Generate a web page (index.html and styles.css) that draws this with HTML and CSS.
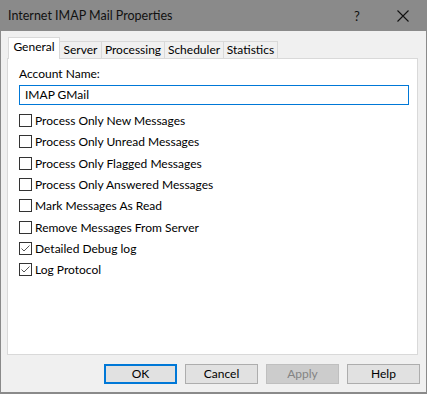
FILE: index.html
```html
<!DOCTYPE html>
<html>
<head>
  <meta charset="UTF-8">
  <title>Internet IMAP Mail Properties</title>
  <link rel="stylesheet" href="styles.css">
</head>
<body>

  <div class="okno">
    <div class="pasek">
      <span class="tytul">Internet IMAP Mail Properties</span>
      <span class="pomoc">?</span>
      <span class="zamknij">
        <svg width="12" height="12" viewBox="0 0 12 12"><path d="M0.5 0.5 L11.5 11.5 M11.5 0.5 L0.5 11.5" stroke="#111" stroke-width="1.1" fill="none"/></svg>
      </span>
    </div>

    <div class="srodek">
      <div class="zakladki">
        <div class="zakladka aktywna">General</div>
        <div class="zakladka z-server">Server</div>
        <div class="zakladka z-processing">Processing</div>
        <div class="zakladka z-scheduler">Scheduler</div>
        <div class="zakladka z-statistics">Statistics</div>
      </div>

      <div class="panel">
        <div class="etykieta">Account Name:</div>
        <div class="pole">IMAP GMail</div>

        <div class="opcje">
          <div class="opcja"><span class="kratka"></span>Process Only New Messages</div>
          <div class="opcja"><span class="kratka"></span>Process Only Unread Messages</div>
          <div class="opcja"><span class="kratka"></span>Process Only Flagged Messages</div>
          <div class="opcja"><span class="kratka"></span>Process Only Answered Messages</div>
          <div class="opcja"><span class="kratka"></span>Mark Messages As Read</div>
          <div class="opcja"><span class="kratka"></span>Remove Messages From Server</div>
          <div class="opcja"><span class="kratka"><svg width="11" height="11" viewBox="0 0 11 11"><path d="M1.5 5.5 L4 8 L9.5 2.5" stroke="#555" stroke-width="1" fill="none"/></svg></span>Detailed Debug log</div>
          <div class="opcja"><span class="kratka"><svg width="11" height="11" viewBox="0 0 11 11"><path d="M1.5 5.5 L4 8 L9.5 2.5" stroke="#555" stroke-width="1" fill="none"/></svg></span>Log Protocol</div>
        </div>
      </div>

      <div class="przyciski">
        <div class="przycisk domyslny">OK</div>
        <div class="przycisk">Cancel</div>
        <div class="przycisk wylaczony">Apply</div>
        <div class="przycisk">Help</div>
      </div>
    </div>
  </div>

</body>
</html>
```

FILE: styles.css
```css
body {
  margin: 0;
  padding: 0;
  background-color: #f0f0f0;
  font-family: 'Lato', 'Noto Sans', sans-serif;
  font-size: 12px;
  color: #000;
}

.okno {
  width: 427px;
  height: 394px;
  box-sizing: border-box;
  border: 1px solid #8a8a8a;
  border-top: none;
  border-bottom-width: 2px;
  display: flex;
  flex-direction: column;
}

.pasek {
  height: 31px;
  background-color: #8a8a8a;
  display: flex;
  align-items: center;
  padding-left: 8px;
  margin: 0 -1px;
}

.tytul {
  flex: 1;
  color: #111;
  font-size: 12.5px;
}

.pomoc {
  width: 14px;
  text-align: center;
  font-size: 13px;
  margin-right: 33px;
  color: #111;
}

.zamknij {
  width: 12px;
  height: 12px;
  margin-right: 18px;
  display: flex;
}

.srodek {
  flex: 1;
  padding: 6px 8px 0 6px;
  display: flex;
  flex-direction: column;
}

.zakladki {
  display: flex;
  align-items: flex-end;
  height: 21px;
  padding-left: 1px;
  position: relative;
  z-index: 1;
}

.zakladka {
  height: 17px;
  box-sizing: border-box;
  border: 1px solid #d9d9d9;
  border-bottom: none;
  border-left: none;
  text-align: center;
  line-height: 16px;
  background-color: #f0f0f0;
}

.aktywna {
  width: 52px;
  height: 22px;
  margin-bottom: -1px;
  border-left: 1px solid #d9d9d9;
  background-color: #fff;
  line-height: 18px;
}

.z-server { width: 42px; }
.z-processing { width: 63px; }
.z-scheduler { width: 59px; }
.z-statistics { width: 54px; }

.panel {
  height: 297px;
  box-sizing: border-box;
  border: 1px solid #d9d9d9;
  background-color: #fff;
  padding: 7px 8px 0 11px;
}

.etykieta {
  line-height: 16px;
  height: 19px;
}

.pole {
  height: 20px;
  box-sizing: border-box;
  border: 1px solid #0078d7;
  line-height: 17px;
  padding-left: 5px;
}

.opcje {
  margin-top: 5px;
}

.opcja {
  height: 21.3px;
  display: flex;
  align-items: center;
}

.kratka {
  width: 13px;
  height: 13px;
  box-sizing: border-box;
  border: 1px solid #333;
  background-color: #fff;
  margin-right: 3px;
  display: flex;
  align-items: center;
  justify-content: center;
}

.przyciski {
  display: flex;
  justify-content: flex-end;
  gap: 8px;
  margin-top: 9px;
  margin-right: -2px;
}

.przycisk {
  width: 73px;
  height: 20px;
  box-sizing: border-box;
  border: 1px solid #adadad;
  background-color: #e1e1e1;
  text-align: center;
  line-height: 17px;
}

.domyslny {
  border: 2px solid #0078d7;
  line-height: 15px;
}

.wylaczony {
  background-color: #cccccc;
  border-color: #bfbfbf;
  color: #838383;
}
```
